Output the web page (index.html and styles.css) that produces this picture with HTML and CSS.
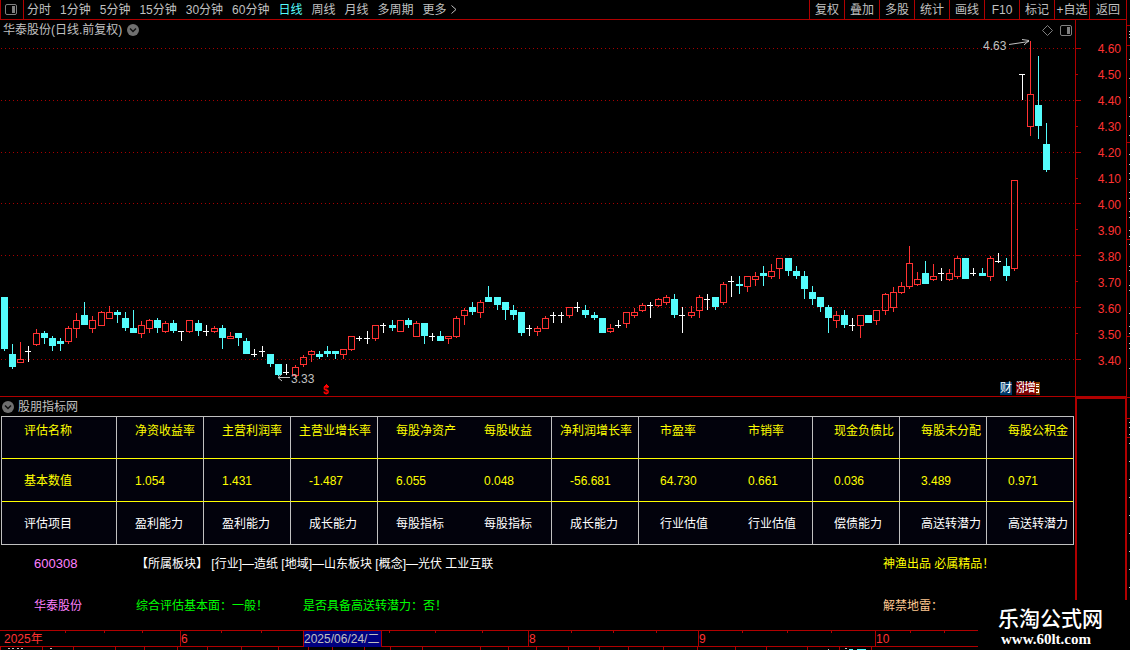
FILE: index.html
```html
<!DOCTYPE html>
<html lang="zh-CN">
<head>
  <meta charset="UTF-8">
  <meta name="viewport" content="width=device-width, initial-scale=1.0">
  <title>华泰股份 日线</title>
  <link rel="stylesheet" href="styles.css">
</head>
<body>
  <div class="app">
    <!-- Toolbar -->
    <header class="toolbar">
      <button class="layout-btn" type="button" aria-label="布局">
        <svg width="12" height="11" viewBox="0 0 12 11">
          <rect x="0.5" y="0.5" width="11" height="10" rx="1.5" fill="none" stroke="#808080"/>
          <rect x="7" y="2" width="3" height="7" fill="#808080"/>
        </svg>
      </button>
      <nav class="periods">
        <a href="#">分时</a>
        <a href="#">1分钟</a>
        <a href="#">5分钟</a>
        <a href="#">15分钟</a>
        <a href="#">30分钟</a>
        <a href="#">60分钟</a>
        <a href="#" class="active">日线</a>
        <a href="#">周线</a>
        <a href="#">月线</a>
        <a href="#">多周期</a>
        <a href="#" class="more">更多
          <svg width="6" height="9" viewBox="0 0 6 9"><path d="M0.5 0.5L5 4.5L0.5 8.5" fill="none" stroke="#c0c0c0"/></svg>
        </a>
      </nav>
      <div class="actions">
        <button type="button">复权</button>
        <button type="button">叠加</button>
        <button type="button">多股</button>
        <button type="button">统计</button>
        <button type="button">画线</button>
        <button type="button">F10</button>
        <button type="button">标记</button>
        <button type="button">+自选</button>
        <button type="button">返回</button>
      </div>
    </header>

    <!-- Candle chart -->
    <section class="chart">
      <svg class="candles" id="candles" viewBox="0 20 1075 376" shape-rendering="crispEdges"></svg>
      <div class="chart-head">
        <h1>华泰股份(日线.前复权)</h1>
        <button class="round-btn" type="button" aria-label="展开">
          <svg width="12" height="12" viewBox="0 0 12 12">
            <circle cx="6" cy="6" r="6" fill="#707070"/>
            <path d="M3 4.5L6 7.5L9 4.5" fill="none" stroke="#111" stroke-width="1.5"/>
          </svg>
        </button>
        <div class="chart-tools">
          <svg width="11" height="11" viewBox="0 0 11 11"><path d="M5.5 0.5L10.5 5.5L5.5 10.5L0.5 5.5Z" fill="none" stroke="#808080"/></svg>
          <svg width="12" height="11" viewBox="0 0 12 11">
            <rect x="0.5" y="0.5" width="11" height="10" rx="1.5" fill="none" stroke="#808080"/>
            <rect x="7" y="2" width="3" height="7" fill="#808080"/>
          </svg>
        </div>
      </div>
      <div class="tags">
        <span class="tag blue">财</span>
        <span class="tag red">涨</span>
        <span class="tag red overlap">增</span>
        <svg width="4" height="13" viewBox="0 0 4 13" shape-rendering="crispEdges">
          <rect width="4" height="13" fill="#804000"/>
          <path d="M0 2.5H3M0 4.5H3M0 7.5H3M0 10.5H3M2.5 7V10" stroke="#fff" fill="none"/>
        </svg>
      </div>
    </section>

    <!-- Price scale -->
    <aside class="scale">
      <svg class="scale-ticks" width="6" height="376" viewBox="0 20 6 376" shape-rendering="crispEdges">
        <path d="M0 48.5H5M0 100.5H5M0 152.5H5M0 203.5H5M0 255.5H5M0 307.5H5M0 359.5H5M0 74.5H2M0 126.5H2M0 178.5H2M0 229.5H2M0 281.5H2M0 333.5H2" stroke="#b00000"/>
      </svg>
      <ol>
        <li>4.60</li>
        <li>4.50</li>
        <li>4.40</li>
        <li>4.30</li>
        <li>4.20</li>
        <li>4.10</li>
        <li>4.00</li>
        <li>3.90</li>
        <li>3.80</li>
        <li>3.70</li>
        <li>3.60</li>
        <li>3.50</li>
        <li>3.40</li>
      </ol>
    </aside>

    <!-- Indicator panel -->
    <section class="indicator">
      <div class="indicator-head">
        <button class="round-btn" type="button" aria-label="展开">
          <svg width="12" height="12" viewBox="0 0 12 12">
            <circle cx="6" cy="6" r="6" fill="#707070"/>
            <path d="M3 4.5L6 7.5L9 4.5" fill="none" stroke="#111" stroke-width="1.5"/>
          </svg>
        </button>
        <h2>股朋指标网</h2>
      </div>

      <table class="metrics">
        <colgroup>
          <col class="name-col">
          <col span="11">
        </colgroup>
        <thead>
          <tr>
            <th scope="col">评估名称</th>
            <th scope="col">净资收益率</th>
            <th scope="col">主营利润率</th>
            <th scope="col" class="long">主营业增长率</th>
            <th scope="col">每股净资产</th>
            <th scope="col" class="joined">每股收益</th>
            <th scope="col" class="long">净利润增长率</th>
            <th scope="col" class="wide">市盈率</th>
            <th scope="col" class="wide joined">市销率</th>
            <th scope="col" class="wide">现金负债比</th>
            <th scope="col" class="wide">每股未分配</th>
            <th scope="col" class="wide">每股公积金</th>
          </tr>
        </thead>
        <tbody>
          <tr class="values">
            <th scope="row">基本数值</th>
            <td>1.054</td>
            <td>1.431</td>
            <td>-1.487</td>
            <td>6.055</td>
            <td class="joined">0.048</td>
            <td>-56.681</td>
            <td class="wide">64.730</td>
            <td class="wide joined">0.661</td>
            <td class="wide">0.036</td>
            <td class="wide">3.489</td>
            <td class="wide">0.971</td>
          </tr>
          <tr class="items">
            <th scope="row">评估项目</th>
            <td>盈利能力</td>
            <td>盈利能力</td>
            <td>成长能力</td>
            <td>每股指标</td>
            <td class="joined">每股指标</td>
            <td>成长能力</td>
            <td class="wide">行业估值</td>
            <td class="wide joined">行业估值</td>
            <td class="wide">偿债能力</td>
            <td class="wide">高送转潜力</td>
            <td class="wide">高送转潜力</td>
          </tr>
        </tbody>
      </table>

      <div class="summary">
        <span class="code">600308</span>
        <span class="sector">【所属板块】 [行业]—造纸 [地域]—山东板块 [概念]—光伏 工业互联</span>
        <span class="brand">神渔出品 必属精品！</span>
        <span class="stock">华泰股份</span>
        <span class="verdict"><span>综合评估基本面：一般！</span><span>是否具备高送转潜力：否！</span></span>
        <span class="unlock">解禁地雷：</span>
      </div>
    </section>
    <div class="side-box"></div>

    <!-- Time axis -->
    <footer class="timeline">
      <svg class="timeline-ticks" width="1126" height="20" viewBox="0 0 1126 20" shape-rendering="crispEdges">
        <path d="M65.5 0V3M104.5 0V3M142.5 0V3M221.5 0V3M261.5 0V3M389.5 0V3M435.5 0V3M482.5 0V3M571.5 0V3M613.5 0V3M656.5 0V3M742.5 0V3M787.5 0V3M831.5 0V3M910.5 0V3M944.5 0V3" stroke="#b00000"/>
        <path d="M0.5 17V20M42.5 17V20M73.5 17V20M115.5 17V20M144.5 17V20M177.5 17V20M207.5 17V20M241.5 17V20M278.5 17V20M308.5 17V20M332.5 17V20M364.5 17V20M390.5 17V20M422.5 17V20M480.5 17V20M508.5 17V20M536.5 17V20M568.5 17V20M599.5 17V20M628.5 17V20M663.5 17V20M697.5 17V20M735.5 17V20M766.5 17V20M807.5 17V20M839.5 17V20M871.5 17V20" stroke="#b00000"/>
        <path d="M8 18.5H10M12 18.5H14M17 18.5H19M21 18.5H23M50 18.5H52M828 19.5H829M845 18.5H847" stroke="#c0c0c0"/>
        <path d="M849 19.5H853M857 19.5H866" stroke="#54fcfc"/>
      </svg>
      <div class="months">
        <span>2025年</span>
        <span>6</span>
        <span class="cursor-date">2025/06/24/二</span>
        <span class="august">8</span>
        <span>9</span>
        <span>10</span>
      </div>
    </footer>

    <!-- Edge of the quote list -->
    <div class="edge">
      <svg width="3" height="600" viewBox="0 0 3 600" shape-rendering="crispEdges">
        <path d="M0 25.5H3M0 45.5H3M0 142.5H3M0 239.5H3M0 336.5H3M0 397.5H3M0 418.5H3M0 437.5H3" stroke="#b00000"/>
        <path id="edge-marks" fill="#c0c0c0"/>
      </svg>
    </div>

    <div class="watermark">
      <strong>乐淘公式网</strong>
      <span>www.60lt.com</span>
    </div>
  </div>
  <script src="chart.js"></script>
</body>
</html>
```

FILE: styles.css
```css
:root {
  --line: #b00000;
  --red: #ff3232;
  --cyan: #54fcfc;
  --text: #c0c0c0;
  --yellow: #ffff00;
}

* {
  margin: 0;
  padding: 0;
  box-sizing: border-box;
}

body {
  background: #000;
  color: var(--text);
  font-family: "Liberation Sans", "Noto Sans CJK SC", sans-serif;
  font-size: 12px;
  line-height: 18px;
  overflow: hidden;
}

button {
  background: none;
  border: 0;
  color: inherit;
  font: inherit;
  cursor: pointer;
}

a {
  color: inherit;
  text-decoration: none;
}

svg {
  display: block;
}

h1,
h2 {
  font-size: 12px;
  font-weight: 400;
}

.app {
  position: relative;
  display: grid;
  grid-template-columns: 1fr 51px 4px;
  grid-template-rows: 20px 1fr 233px 20px;
  min-height: 100vh;
}

/* Toolbar */
.toolbar {
  grid-column: 1 / 3;
  display: flex;
  border-bottom: 1px solid var(--line);
  line-height: 20px;
  white-space: nowrap;
}

.layout-btn {
  width: 24px;
  padding-left: 4px;
  border-left: 1px solid var(--line);
  border-right: 1px solid var(--line);
}

.periods {
  flex: 1;
  display: flex;
  gap: 9px;
  padding-left: 3px;
}

.periods .active {
  color: var(--cyan);
}

.more {
  display: flex;
  align-items: center;
  gap: 4px;
}

.actions {
  display: flex;
}

.actions button {
  width: 35px;
  border-left: 1px solid var(--line);
}

.actions button:last-child {
  width: 37px;
}

/* Chart */
.chart {
  position: relative;
  border-bottom: 1px solid var(--line);
}

.candles {
  width: 100%;
  height: 100%;
}

.candles text {
  fill: var(--text);
}

.candles .signal {
  fill: #ff0000;
  font-size: 10px;
  font-weight: 700;
}

.chart-head {
  position: absolute;
  top: 0;
  left: 0;
  right: 0;
  display: flex;
  align-items: center;
  gap: 5px;
  padding: 0 3px;
  line-height: 20px;
}

.chart-tools {
  display: flex;
  gap: 7px;
  margin-left: auto;
}

.tags {
  position: absolute;
  right: 35px;
  bottom: 1px;
  display: flex;
}

.tag {
  width: 12px;
  height: 13px;
  line-height: 13px;
  color: #fff;
}

.tag.blue {
  background: #003868;
  margin-right: 4px;
}

.tag.red {
  background: #800000;
}

.tag.overlap {
  margin-left: -4px;
}

/* Price scale */
.scale {
  position: relative;
  border-left: 1px solid var(--line);
  border-bottom: 1px solid var(--line);
  padding: 16px 5px 0 0;
}

.scale-ticks {
  position: absolute;
  top: 0;
  left: 0;
}

.scale ol {
  list-style: none;
  color: var(--red);
  text-align: right;
  line-height: 26px;
}

/* Indicator */
.indicator-head {
  display: flex;
  align-items: center;
  gap: 4px;
  height: 19px;
  padding-left: 2px;
}

.round-btn {
  display: block;
}

.metrics {
  width: calc(100% - 2px);
  margin: 0 1px;
  table-layout: fixed;
  border-collapse: separate;
  border-spacing: 0;
  border: 1px solid var(--text);
  background: #02020c;
  color: var(--yellow);
  white-space: nowrap;
}

.name-col {
  width: 114px;
}

.metrics th,
.metrics td {
  height: 43px;
  padding-top: 2px;
  padding-left: 18px;
  border-left: 1px solid var(--text);
  border-bottom: 1px solid var(--yellow);
  font-weight: 400;
  text-align: left;
}

.metrics thead th {
  height: 42px;
  padding-top: 5px;
  vertical-align: top;
}

.metrics .long {
  padding-left: 8px;
}

.metrics .joined {
  padding-left: 20px;
  border-left: 0;
}

.metrics .wide {
  padding-left: 21px;
}

.metrics .wide.joined {
  padding-left: 23px;
}

.metrics th:first-child {
  padding-left: 22px;
  border-left: 0;
}

.metrics .items th,
.metrics .items td {
  height: 42px;
  border-bottom: 0;
  color: #fff;
}

.summary {
  display: grid;
  grid-template-columns: 102fr 747fr 192fr;
  row-gap: 24px;
  padding: 10px 0 0 34px;
  white-space: nowrap;
}

.code,
.stock {
  color: #ff80ff;
}

.code {
  font-size: 13px;
}

.sector {
  color: #fff;
}

.brand {
  color: var(--yellow);
}

.verdict {
  display: flex;
  gap: 35px;
  color: #00ff00;
}

.unlock {
  color: #ffc890;
}

.side-box {
  border: 2px solid var(--line);
  border-right-width: 1px;
  border-bottom: 0;
}

/* Time axis */
.timeline {
  grid-column: 1 / 3;
  position: relative;
}

.timeline-ticks {
  position: absolute;
  top: 0;
  left: 0;
}

.months {
  display: grid;
  grid-template-columns: 180fr 123fr 79fr 146fr 170fr 177fr 251fr;
  height: 17px;
  border-top: 1px solid var(--line);
  border-bottom: 1px solid var(--line);
  color: var(--red);
  line-height: 16px;
  white-space: nowrap;
}

.months span {
  border-left: 1px solid var(--line);
}

.months span:first-child {
  padding-left: 4px;
  border-left: 0;
}

.months .cursor-date {
  background: #000080;
  border-right: 1px solid var(--line);
  color: var(--text);
}

.months .august {
  grid-column: 5;
}

.edge {
  grid-column: 3;
  grid-row: 1 / 5;
  border-left: 1px solid var(--line);
}

.watermark {
  position: absolute;
  right: 0;
  bottom: 0;
  display: flex;
  flex-direction: column;
  width: 152px;
  height: 50px;
  padding: 8px 0 0 20px;
  background: #000;
  color: #fff;
}

.watermark strong {
  font-size: 21px;
  font-weight: 500;
  line-height: 22px;
}

.watermark span {
  padding-left: 3px;
  font: bold 15px/18px "Liberation Serif", serif;
}
```

FILE: chart.js
```js
const RED = '#ff3232';
const CYAN = '#54fcfc';
const WHITE = '#ffffff';

// x, high, body top, body bottom, low, kind (u = up, d = down, w = flat)
const bars = [
  [4,297,297,349,351,'d'],[12,344,354,367,369,'d'],[20,342,359,363,363,'u'],[28,346,351,352,362,'w'],
  [36,329,333,345,346,'u'],[44,331,333,338,344,'d'],[52,336,338,346,351,'d'],[60,338,341,344,351,'d'],
  [68,326,328,342,344,'u'],[76,313,320,329,338,'u'],[84,302,315,325,325,'d'],[92,316,320,329,333,'u'],
  [101,311,312,326,326,'u'],[109,306,312,319,319,'u'],[117,310,312,315,323,'d'],[125,312,318,328,331,'d'],
  [133,310,328,333,333,'d'],[141,321,325,334,338,'u'],[149,319,320,329,333,'u'],[157,318,320,328,333,'d'],
  [165,321,323,332,333,'u'],[173,320,323,331,333,'d'],[181,331,331,332,341,'w'],[189,320,320,332,333,'u'],
  [198,320,323,331,336,'d'],[206,325,331,332,336,'w'],[214,326,328,332,333,'u'],[222,325,328,338,349,'d'],
  [230,332,336,339,339,'u'],[238,333,333,338,346,'d'],[246,338,341,354,354,'d'],[254,349,354,355,357,'w'],
  [262,346,351,352,357,'w'],[270,354,354,364,367,'d'],[278,364,364,375,376,'d'],[286,364,372,373,375,'w'],
  [295,365,367,376,377,'u'],[303,355,357,365,367,'u'],[311,350,351,355,362,'u'],[319,351,354,357,359,'d'],
  [327,346,351,354,357,'d'],[335,351,351,354,359,'d'],[343,349,349,355,359,'u'],[351,336,336,350,351,'u'],
  [359,336,338,339,341,'w'],[367,331,338,339,344,'w'],[375,325,325,339,341,'u'],[383,323,325,326,333,'w'],
  [392,320,325,328,331,'d'],[400,320,320,332,332,'u'],[408,318,320,325,328,'d'],[416,321,323,337,337,'u'],
  [424,323,323,336,344,'d'],[432,333,336,337,341,'w'],[440,331,336,341,341,'d'],[448,336,336,339,344,'u'],
  [456,316,318,337,338,'u'],[464,308,310,316,325,'u'],[472,302,307,312,315,'d'],[480,300,302,313,318,'u'],
  [488,286,297,302,302,'d'],[497,297,297,305,310,'d'],[505,302,302,310,320,'d'],[513,305,310,315,320,'d'],
  [521,312,312,333,336,'d'],[529,325,328,329,336,'w'],[537,326,328,332,336,'u'],[545,316,318,329,329,'u'],
  [553,312,315,316,323,'w'],[561,312,315,316,323,'w'],[569,307,307,316,318,'u'],[577,302,307,308,312,'w'],
  [585,305,310,315,318,'d'],[594,312,315,318,320,'d'],[602,318,318,333,333,'d'],[610,324,328,332,333,'u'],
  [618,320,325,326,328,'w'],[626,312,312,324,328,'u'],[634,308,312,316,318,'u'],[642,303,305,311,312,'u'],
  [650,302,305,306,318,'w'],[658,298,299,306,307,'u'],[666,295,297,303,305,'u'],[674,294,299,315,318,'d'],
  [682,307,315,316,333,'w'],[691,306,312,316,318,'u'],[699,295,297,311,318,'u'],[707,294,299,300,310,'w'],
  [715,297,297,307,310,'d'],[723,282,284,303,305,'u'],[731,276,281,282,297,'w'],[739,276,284,286,294,'d'],
  [747,276,276,287,292,'u'],[755,272,276,280,286,'u'],[763,266,273,276,286,'d'],[771,264,271,277,279,'u'],
  [779,258,258,269,279,'u'],[788,258,258,271,276,'d'],[796,266,271,276,279,'d'],[804,271,276,289,299,'d'],
  [812,286,292,299,305,'d'],[820,297,297,307,312,'d'],[828,305,307,318,333,'d'],[836,311,315,321,328,'u'],
  [844,310,315,325,328,'d'],[852,318,325,326,331,'w'],[860,315,315,326,338,'u'],[868,315,315,323,323,'d'],
  [876,310,310,321,325,'u'],[885,293,294,311,315,'u'],[893,287,292,308,312,'u'],[901,282,286,293,294,'u'],
  [909,246,263,287,289,'u'],[917,272,279,285,286,'u'],[925,261,273,284,284,'d'],[933,264,276,280,281,'u'],
  [941,268,273,274,281,'w'],[949,269,273,280,281,'u'],[957,256,258,277,279,'u'],[965,258,258,279,279,'d'],
  [973,268,273,274,276,'w'],[982,268,273,276,276,'d'],[990,256,258,277,281,'u'],[998,253,261,262,263,'w'],
  [1006,258,266,276,281,'d'],[1014,180,180,269,271,'u'],[1022,74,74,75,100,'w'],[1030,41,94,127,136,'u'],
  [1038,56,105,126,139,'d'],[1046,123,144,170,172,'d']
];

const gridRows = [48, 100, 152, 203, 255, 307, 359];

const rect = (x, y, w, h, fill) =>
  `<rect x="${x}" y="${y}" width="${w}" height="${h}" fill="${fill}"/>`;

let out = '';

gridRows.forEach(y => {
  out += `<path d="M1 ${y}.5H1075" stroke="#a80000" stroke-dasharray="1 3"/>`;
});

bars.forEach(([x, high, top, bottom, low, kind]) => {
  if (kind === 'u') {
    out += rect(x, high, 1, top - high, RED) + rect(x, bottom, 1, low - bottom, RED);
    out += `<rect x="${x - 2.5}" y="${top + 0.5}" width="6" height="${bottom - top - 1}" fill="none" stroke="${RED}"/>`;
  } else if (kind === 'd') {
    out += rect(x, high, 1, low - high, CYAN) + rect(x - 3, top, 7, bottom - top, CYAN);
  } else {
    out += rect(x, high, 1, low - high, WHITE) + rect(x - 3, top, 6, 1, WHITE);
  }
});

// High and low labels
out += '<text x="983" y="50">4.63</text>';
out += '<path d="M1009 44.5L1029 41.5M1022 39.5L1029 40.5L1024 45" fill="none" stroke="#c0c0c0" shape-rendering="auto"/>';
out += '<text x="291" y="383">3.33</text>';
out += '<path d="M278 377.5H290M282 374L278 377.5L282 381" fill="none" stroke="#c0c0c0" shape-rendering="auto"/>';

// Buy signal
out += '<path d="M323 387H329L326 384Z" fill="#ff0000"/>';
out += '<text class="signal" x="323" y="394">$</text>';

document.getElementById('candles').innerHTML = out;

// Row marks of the quote list
const marks = [
  31, 34, 37, 59, 78, 97, 116, 135, 154, 164, 173, 179, 192, 198, 211, 217, 230, 236, 244, 266, 270,
  285, 290, 313, 326, 333, 343, 348, 368, 422, 427, 434, 443, 461, 479, 497, 515, 533, 551, 569, 587
];
document.getElementById('edge-marks').setAttribute('d', marks.map(y => `M2 ${y}h1v1h-1z`).join(''));
```
